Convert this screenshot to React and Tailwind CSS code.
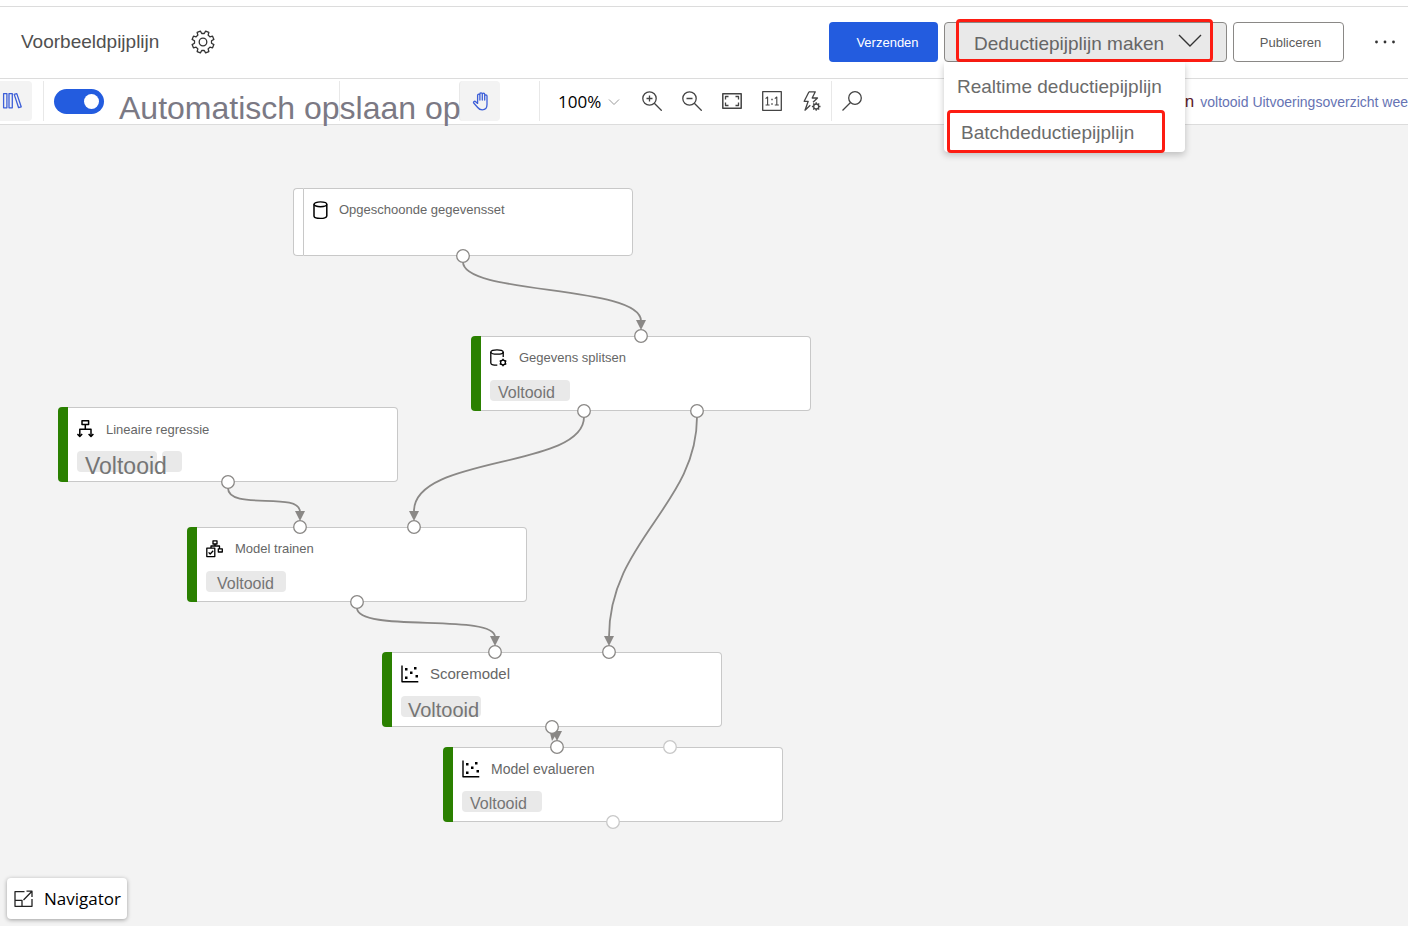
import React from 'react';

function gearPath(cx, cy, outer, inner, teeth) {
  const step = (Math.PI * 2) / teeth;
  const points = [];
  for (let i = 0; i < teeth; i++) {
    const mid = i * step - Math.PI / 2 + step / 2;
    [
      [-0.31, inner],
      [-0.2, outer],
      [0.2, outer],
      [0.31, inner],
    ].forEach(([f, r]) => {
      const a = mid + f * step;
      points.push((cx + r * Math.cos(a)).toFixed(2) + ' ' + (cy + r * Math.sin(a)).toFixed(2));
    });
  }
  return 'M' + points.join('L') + 'Z';
}

function Icon({ size = 20, className = '', children }) {
  return (
    <svg
      width={size}
      height={size}
      viewBox={`0 0 ${size} ${size}`}
      fill="none"
      stroke="currentColor"
      strokeWidth="1.3"
      strokeLinejoin="round"
      className={`shrink-0 ${className}`}
      aria-hidden="true"
    >
      {children}
    </svg>
  );
}

const GearIcon = () => (
  <Icon size={24}>
    <path d={gearPath(12, 12, 11.2, 8.6, 8)} />
    <circle cx="12" cy="12" r="3.8" />
  </Icon>
);

const LibraryIcon = () => (
  <Icon>
    <path d="M1.6 2.6h3.3v14.2H1.6zM7 2.6h3.3v14.2H7zM12.2 3.4l2.6-.8 4.4 13.2-2.6.9z" />
  </Icon>
);

const HandIcon = () => (
  <Icon>
    <path d="M5.6 12.4V4.3c0-1.5 2.3-1.5 2.3 0V9 3c0-1.6 2.4-1.6 2.4 0v6-5.7c0-1.5 2.4-1.5 2.4 0V9 5c0-1.5 2.3-1.5 2.3 0v8.500c0 3.200-2 5.300-4.700 5.300-2.200 0-3.500-.8-4.600-2.300L1.700 12c-.8-1.400 1-2.200 2-1.300z" />
  </Icon>
);

const ZoomInIcon = () => (
  <Icon>
    <circle cx="7.500" cy="7.500" r="6.700" />
    <path d="M12.300 12.300l7.400 7.400M4.500 7.500h6M7.500 4.500v6" />
  </Icon>
);

const ZoomOutIcon = () => (
  <Icon>
    <circle cx="7.500" cy="7.500" r="6.700" />
    <path d="M12.300 12.300l7.400 7.400M4.500 7.500h6" />
  </Icon>
);

const FitIcon = () => (
  <Icon>
    <rect x=".8" y="2.800" width="18.400" height="14.400" strokeWidth="1.500" />
    <path d="M6.500 5.500h-3v3M13.500 5.500h3v3M6.500 14.500h-3v-3M13.500 14.500h3v-3" />
  </Icon>
);

const ActualSizeIcon = () => (
  <Icon>
    <rect x=".7" y=".7" width="18.600" height="18.600" />
    <path d="M3.600 7.600l2-1.600v8M3.600 14h4M12.800 7.600l2-1.600v8M12.800 14h4" strokeWidth="1.100" />
    <path d="M9.300 8.500h1.400M9.300 13h1.400" strokeWidth="1.500" />
  </Icon>
);

const BoltIcon = () => (
  <Icon>
    <path d="M7 .8h6.300L10.200 7h5.300L11 11.200M7 .8L2.200 10.300h4L3 19.200l5.300-5" />
    <circle cx="14.200" cy="15.500" r="2.500" />
    <path d="M14.200 11.200v1.800M14.200 18v1.800M9.900 15.500h1.800M16.700 15.500h1.800M11.200 12.500l1.200 1.200M16 17.300l1.200 1.200M17.200 12.500L16 13.700M12.400 17.300l-1.200 1.200" />
  </Icon>
);

const SearchIcon = () => (
  <Icon>
    <circle cx="13" cy="7" r="6.300" />
    <path d="M8.500 11.500L.5 19.500" />
  </Icon>
);

const DatasetIcon = () => (
  <Icon size={18} className="text-black">
    <path d="M1 3.300v11.800c0 3.100 12.800 3.100 12.800 0V3.300" strokeWidth="1.500" />
    <ellipse cx="7.400" cy="3.300" rx="6.400" ry="2.400" strokeWidth="1.400" />
  </Icon>
);

const SplitIcon = () => (
  <Icon size={18} className="text-black">
    <ellipse cx="7" cy="3" rx="6.200" ry="2.200" />
    <path d="M.8 3v11c0 1.600 3 2.200 6.500 2.200M13.200 3v5" />
    <circle cx="13" cy="13.500" r="2.400" />
    <path d="M13 9.700v1.400M13 15.900v1.400M9.700 11.600l1.200.7M15.100 14.700l1.200.7M16.300 11.600l-1.200.7M10.900 14.700l-1.200.7" strokeWidth="1.500" />
  </Icon>
);

const RegressionIcon = () => (
  <Icon size={18} className="text-black">
    <path d="M5 .8h6.600v3.600H5zM8.300 4.400v4.500M2.800 15.500V9.200H14v6.300" strokeWidth="1.500" />
    <path d="M.4 14l2.400 2.400L5.200 14M11.600 14l2.400 2.400 2.400-2.400" strokeWidth="1.500" />
  </Icon>
);

const TrainIcon = () => (
  <Icon size={18} className="text-black">
    <path d="M7 .8h4v3.200H7zM9 4v2M5 8V6h8.500v2.800M12.300 8.800h4V12h-4zM.8 8.200h8v8.400h-8z" strokeWidth="1.300" />
    <path d="M2.600 12.400l1.600 1.600 3-3.200" strokeWidth="1.300" />
  </Icon>
);

const ScatterIcon = () => (
  <Icon size={18} className="text-black">
    <path d="M1 .5v16.300h16.300" strokeWidth="1.400" />
    <path d="M4 3h2.500v2.500H4zM13 2h2.500v2.500H13zM9 6.500h2.500V9H9zM14.500 10H17v2.500h-2.500zM4 11.500h2.500V14H4z" fill="currentColor" stroke="none" />
  </Icon>
);

const nodes = [
  {
    title: 'Opgeschoonde gegevensset',
    icon: DatasetIcon,
    place: 'left-[293px] top-[63px] h-[68px]',
    bar: 'border border-r-0 border-[#c8c8c8] bg-white',
    font: 'text-[13px]',
    gap: 'gap-2',
  },
  {
    title: 'Gegevens splitsen',
    icon: SplitIcon,
    place: 'left-[471px] top-[211px] h-[75px]',
    bar: 'bg-[#2a8000]',
    font: 'text-[13px]',
    badge: 'pl-2 text-base leading-[26px]',
  },
  {
    title: 'Lineaire regressie',
    icon: RegressionIcon,
    place: 'left-[58px] top-[282px] h-[75px]',
    bar: 'bg-[#2a8000]',
    font: 'pt-[2px] text-[13px]',
    badge: 'pl-2 text-[23px] leading-[30px]',
    extraChip: true,
  },
  {
    title: 'Model trainen',
    icon: TrainIcon,
    place: 'left-[187px] top-[402px] h-[75px]',
    bar: 'bg-[#2a8000]',
    font: 'text-[13px]',
    badge: 'pl-[11px] text-base leading-[26px]',
  },
  {
    title: 'Scoremodel',
    icon: ScatterIcon,
    place: 'left-[382px] top-[527px] h-[75px]',
    bar: 'bg-[#2a8000]',
    font: 'text-[15px]',
    badge: 'pl-[7px] text-[20px] leading-[28px]',
  },
  {
    title: 'Model evalueren',
    icon: ScatterIcon,
    place: 'left-[443px] top-[622px] h-[75px]',
    bar: 'bg-[#2a8000]',
    font: 'text-sm',
    badge: 'pl-2 text-base leading-[26px]',
  },
];

function Node({ node }) {
  const NodeIcon = node.icon;
  return (
    <article className={`absolute flex w-[340px] ${node.place}`}>
      <div className={`w-[10px] shrink-0 rounded-l ${node.bar}`} />
      <div className={`min-w-0 flex-1 rounded-r border border-[#c8c8c8] bg-white pt-[11px] ${node.badge ? 'border-l-0 pl-[9px]' : 'pl-[9px]'}`}>
        <div className={`flex h-5 items-center ${node.gap || 'gap-[11px]'}`}>
          <NodeIcon />
          <h2 className={`whitespace-nowrap text-[#666] ${node.font}`}>{node.title}</h2>
        </div>
        {node.badge && (
          <div className="mt-3 flex gap-[5px]">
            <div className={`relative z-10 h-[21px] w-20 whitespace-nowrap rounded bg-[#e9e9e9] text-[#757575] ${node.badge}`}>
              Voltooid
            </div>
            {node.extraChip && <div className="h-[21px] w-5 rounded bg-[#e9e9e9]" />}
          </div>
        )}
      </div>
    </article>
  );
}

const edges = [
  { d: 'M463 137C463 170 641 160 641 196', x: 641, y: 205 },
  { d: 'M584 292C584 344 414 330 414 386', x: 414, y: 396 },
  { d: 'M697 292C697 380 609 416 609 512', x: 609, y: 521 },
  { d: 'M228 363C228 386 300 366 300 387', x: 300, y: 396 },
  { d: 'M357 483C357 508 495 488 495 512', x: 495, y: 521 },
  { d: 'M552 608C552 612 557 608 557 610', x: 557, y: 616 },
];

const ports = [
  [463, 131], [641, 211], [584, 286], [697, 286], [228, 357], [300, 402],
  [414, 402], [357, 477], [495, 527], [609, 527], [552, 602], [557, 622],
];
const idlePorts = [[670, 622], [613, 697]];

function Connections() {
  return (
    <svg className="pointer-events-none absolute inset-0 h-full w-full" aria-hidden="true">
      {edges.map((e) => (
        <g key={e.d}>
          <path d={e.d} fill="none" stroke="#8a8886" strokeWidth="1.8" />
          <path d={`M${e.x - 5} ${e.y - 10}h10L${e.x} ${e.y}z`} fill="#8a8886" />
        </g>
      ))}
      <path d="M550 608l2 8 5-8z" fill="#8a8886" />
      {ports.map(([x, y]) => (
        <circle key={`${x}-${y}`} cx={x} cy={y} r="6.3" fill="#fff" stroke="#8a8886" strokeWidth="1.3" />
      ))}
      {idlePorts.map(([x, y]) => (
        <circle key={`${x}-${y}`} cx={x} cy={y} r="6.3" fill="#fff" stroke="#c8c8c8" strokeWidth="1.3" />
      ))}
    </svg>
  );
}

const Divider = ({ className = '' }) => (
  <span className={`h-10 w-px shrink-0 bg-[#e8e8e8] ${className}`} />
);

function Header() {
  return (
    <header className="relative z-20 mt-[6px] flex h-[73px] items-center border-y border-[#dcdcdc] bg-white pb-[2px]">
      <h1 className="ml-[21px] pt-[2px] text-[19px] text-[#505050]">Voorbeeldpijplijn</h1>
      <button type="button" aria-label="Instellingen" className="ml-8 text-[#333]">
        <GearIcon />
      </button>
      <div className="ml-auto flex items-center">
        <button type="button" className="h-10 w-[109px] rounded-sm bg-[#235cdf] pl-2 pt-[3px] text-[13px] text-white">
          Verzenden
        </button>
        <div className="relative ml-[6px]">
          <button
            type="button"
            aria-expanded="true"
            className="flex h-10 w-[283px] items-center rounded-sm border border-[#8a8886] bg-[#e9e9e9] pl-[29px] pt-[6px] text-[19px] text-[#666]"
          >
            Deductiepijplijn maken
            <svg width="24" height="14" viewBox="0 0 24 14" fill="none" stroke="#333" strokeWidth="1.4" className="mb-2 ml-[14px]" aria-hidden="true">
              <path d="M1 1l11 11L23 1" />
            </svg>
          </button>
          <span className="pointer-events-none absolute -top-[3px] left-3 h-[43px] w-[257px] rounded-sm border-3 border-[#fd1c12]" />
          <div role="menu" className="absolute left-0 top-10 flex h-[90px] w-[241px] flex-col rounded-b-sm bg-white text-left text-[19px] text-[#6b6b6b] shadow-[0_3px_7px_rgba(0,0,0,0.22)]">
            <button type="button" role="menuitem" className="h-12 shrink-0 pl-[13px] pt-1 text-left">
              Realtime deductiepijplijn
            </button>
            <button type="button" role="menuitem" className="ml-[3px] h-[43px] w-[218px] shrink-0 rounded-sm border-3 border-[#fd1c12] pl-[11px] pt-1 text-left">
              Batchdeductiepijplijn
            </button>
          </div>
        </div>
        <button type="button" className="ml-[6px] h-10 w-[111px] rounded-sm border border-[#8a8886] bg-white pl-1 pt-[2px] text-[13px] text-[#5c5c5c]">
          Publiceren
        </button>
        <button type="button" aria-label="Meer" className="ml-[29px] mr-[11px] text-[#333]">
          <svg width="24" height="4" viewBox="0 0 24 4" fill="currentColor" aria-hidden="true">
            <circle cx="3.500" cy="2" r="1.400" />
            <circle cx="12" cy="2" r="1.400" />
            <circle cx="20.500" cy="2" r="1.400" />
          </svg>
        </button>
      </div>
    </header>
  );
}

function Toolbar() {
  return (
    <div role="toolbar" className="relative z-10 flex h-[46px] items-center border-b border-[#dcdcdc] bg-white pb-[2px]">
      <button type="button" aria-label="Bibliotheek" className="flex h-10 w-8 shrink-0 items-center rounded-r-sm bg-[#f3f3f3] pl-[2px] text-[#3d5fd8]">
        <LibraryIcon />
      </button>
      <Divider className="ml-[11px]" />
      <div className="relative flex w-[415px] shrink-0 items-center pl-[10px]">
        <Divider className="absolute left-[295px]" />
        <input
          id="autosave"
          type="checkbox"
          role="switch"
          defaultChecked
          className="relative mt-[2px] h-[25px] w-[50px] shrink-0 appearance-none rounded-full bg-[#235cdf] before:absolute before:right-[5px] before:top-[5px] before:size-[15px] before:rounded-full before:bg-white"
        />
        <label htmlFor="autosave" className="relative mt-[14px] whitespace-nowrap pl-[15px] text-[32px] leading-9 text-[#7b7984]">
          Automatisch opslaan op
        </label>
      </div>
      <button type="button" aria-label="Pannen" className="flex h-10 w-[41px] shrink-0 items-center rounded-sm border-l border-[#e8e8e8] bg-[#f3f3f3] pl-3 text-[#3d5fd8]">
        <HandIcon />
      </button>
      <Divider className="ml-[39px]" />
      <div className="relative ml-[18px] flex w-[62px] shrink-0 items-center pt-[2px] font-['Open_Sans',sans-serif]">
        <select aria-label="Zoomniveau" className="w-full appearance-none bg-transparent text-[17px] text-black" defaultValue="100%">
          <option>100%</option>
        </select>
        <svg width="12" height="8" viewBox="0 0 12 8" fill="none" stroke="#999" className="pointer-events-none absolute right-0" aria-hidden="true">
          <path d="M1 1.500l5 5 5-5" />
        </svg>
      </div>
      <div className="ml-[22px] flex shrink-0 items-center gap-5 text-[#444]">
        <button type="button" aria-label="Inzoomen"><ZoomInIcon /></button>
        <button type="button" aria-label="Uitzoomen"><ZoomOutIcon /></button>
        <button type="button" aria-label="Passend maken"><FitIcon /></button>
        <button type="button" aria-label="Ware grootte"><ActualSizeIcon /></button>
        <button type="button" aria-label="Automatische indeling"><BoltIcon /></button>
      </div>
      <Divider className="ml-[9px]" />
      <button type="button" aria-label="Zoeken" className="ml-[10px] shrink-0 text-[#444]">
        <SearchIcon />
      </button>
      <p className="ml-auto flex shrink-0 items-center gap-[6px] whitespace-nowrap pt-[2px]">
        <span className="text-[17px] text-[#5a1a2a]">n</span>
        <a href="#overzicht" className="text-sm text-[#6673b3]">voltooid Uitvoeringsoverzicht wee</a>
      </p>
    </div>
  );
}

export default function App() {
  return (
    <div className="flex min-h-screen flex-col overflow-x-hidden bg-white font-['Liberation_Sans',Arial,sans-serif]">
      <Header />
      <Toolbar />
      <main className="relative min-h-[780px] flex-1 bg-[#f3f3f3]">
        {nodes.map((node) => (
          <Node key={node.title} node={node} />
        ))}
        <Connections />
        <button
          type="button"
          className="absolute bottom-[7px] left-[7px] flex h-[41px] items-center gap-[10px] rounded-sm bg-white pl-[7px] pr-[6px] font-['Open_Sans',sans-serif] text-[17px] text-black shadow-[0_1px_4px_rgba(0,0,0,0.35)]"
        >
          <Icon className="text-[#222]">
            <path d="M10.500 2.700H1v14.600h17V10M1 11.300h7v6M9.500 11l8-8.200M12.500 2.200H18V8" />
          </Icon>
          Navigator
        </button>
      </main>
    </div>
  );
}
